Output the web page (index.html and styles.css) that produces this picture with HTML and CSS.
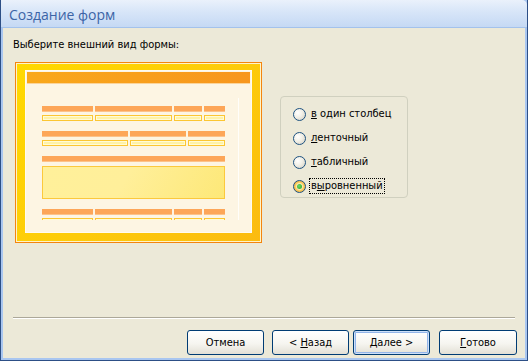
FILE: index.html
```html
<!DOCTYPE html>
<html lang="ru">
<head>
    <meta charset="UTF-8">
    <title>Создание форм</title>
    <link rel="stylesheet" href="styles.css">
</head>
<body>
    <div class="window">
        <div class="titlebar">Создание форм</div>
        <div class="content">
            <p class="prompt">Выберите внешний вид формы:</p>
            <div class="main">
                <div class="preview">
                    <div class="preview-frame">
                        <div class="sheet">
                            <div class="sheet-header"></div>
                            <div class="canvas">
                                <div class="bars cols-a">
                                    <span></span><span></span><span></span><span></span>
                                </div>
                                <div class="fields cols-a">
                                    <span></span><span></span><span></span><span></span>
                                </div>
                                <div class="bars cols-b gap-row">
                                    <span></span><span></span><span></span>
                                </div>
                                <div class="fields cols-b">
                                    <span></span><span></span><span></span>
                                </div>
                                <div class="bars gap-row wide">
                                    <span></span>
                                </div>
                                <div class="memo"></div>
                                <div class="bars cols-a gap-row">
                                    <span></span><span></span><span></span><span></span>
                                </div>
                                <div class="fields cols-a">
                                    <span></span><span></span><span></span><span></span>
                                </div>
                            </div>
                        </div>
                    </div>
                </div>

                <div class="layouts">
                    <div class="option">
                        <span class="radio"></span>
                        <span class="option-label"><u>в</u> один столбец</span>
                    </div>
                    <div class="option">
                        <span class="radio"></span>
                        <span class="option-label"><u>л</u>енточный</span>
                    </div>
                    <div class="option">
                        <span class="radio"></span>
                        <span class="option-label"><u>т</u>абличный</span>
                    </div>
                    <div class="option">
                        <span class="radio checked"></span>
                        <span class="option-label focused">в<u>ы</u>ровненный</span>
                    </div>
                </div>
            </div>

            <div class="separator"></div>

            <div class="buttons">
                <button class="btn cancel">Отмена</button>
                <button class="btn back">&lt; <u>Н</u>азад</button>
                <button class="btn next default"><u>Д</u>алее &gt;</button>
                <button class="btn finish"><u>Г</u>отово</button>
            </div>
        </div>
    </div>
</body>
</html>
```

FILE: styles.css
```css
body, html {
    margin: 0;
    height: 100%;
    background-color: #ece9d8;
}
.window {
    width: 528px;
    height: 361px;
    box-sizing: border-box;
    display: flex;
    flex-direction: column;
    background-color: #a9c6f0;
    border-left: 1px solid #2d4f86;
    border-right: 1px solid #2d4f86;
    border-bottom: 1px solid #2d4f86;
    padding: 0 2px 2px 2px;
    font-family: 'DejaVu Sans Condensed', 'DejaVu Sans', sans-serif;
    font-size: 11px;
    color: #000;
}
.titlebar {
    height: 27px;
    margin: 0 -2px;
    padding-left: 8px;
    border-bottom: 1px solid #a3c2ec;
    border-top-right-radius: 5px;
    background: linear-gradient(#eaf1fb, #d7e5f8 45%, #c5d9f4);
    font-family: 'Open Sans', 'DejaVu Sans', sans-serif;
    font-size: 14px;
    line-height: 30px;
    color: #3c64a6;
}
.content {
    flex: 1;
    background-color: #ece9d8;
    display: flex;
    flex-direction: column;
}
.prompt {
    margin: 0;
    padding: 10px 0 0 10px;
    line-height: 14px;
}
.main {
    display: flex;
    align-items: flex-start;
    margin-top: 10px;
    padding-left: 12px;
}

/* form preview picture */
.preview {
    width: 247px;
    height: 181px;
    box-sizing: border-box;
    border: 1px solid #f4850e;
    background-color: #fff4c8;
    padding: 1px;
}
.preview-frame {
    height: 100%;
    box-sizing: border-box;
    padding: 6px 8px 8px 8px;
    background: linear-gradient(135deg, #ffd900, #fdcb0a 55%, #fbbb10);
}
.sheet {
    height: 100%;
    box-sizing: border-box;
    border: 1px solid #fffbf0;
    padding: 1px;
    background-color: #fdf5e3;
}
.sheet-header {
    height: 12px;
    background: linear-gradient(100deg, #f9a81b, #f7961d);
    border-bottom: 1px solid #fbd49a;
    box-sizing: border-box;
}
.canvas {
    margin-top: 14px;
    width: 212px;
    height: 122px;
    box-sizing: border-box;
    border-right: 1px solid #fffefa;
    padding: 8px 0 0 15px;
    overflow: hidden;
}
.bars, .fields {
    display: flex;
    gap: 2px;
    width: 183px;
}
.bars span {
    height: 5px;
    background-color: #fda658;
    border-bottom: 1px solid #fcc28a;
}
.fields {
    margin-top: 3px;
}
.fields span {
    height: 6px;
    box-sizing: border-box;
    border: 1px solid #fcc632;
    background-color: #fff2a6;
    box-shadow: inset 0 0 0 1px #fffbd6;
}
.cols-a span:nth-child(1) { width: 51px; }
.cols-a span:nth-child(2) { width: 77px; }
.cols-a span:nth-child(3) { width: 28px; }
.cols-a span:nth-child(4) { width: 21px; }
.cols-b span:nth-child(1) { width: 86px; }
.cols-b span:nth-child(2) { width: 56px; }
.cols-b span:nth-child(3) { width: 37px; }
.wide span { width: 183px; }
.gap-row {
    margin-top: 10px;
}
.memo {
    margin-top: 4px;
    width: 183px;
    height: 33px;
    box-sizing: border-box;
    border: 1px solid #fcc93c;
    background: linear-gradient(120deg, #fff09a, #ffef9a 45%, #fde878);
}

/* layout options */
.layouts {
    margin: 34px 0 0 18px;
    width: 128px;
    height: 102px;
    box-sizing: border-box;
    border: 1px solid #d0d0bf;
    border-radius: 4px;
    padding: 5px 0 0 12px;
}
.option {
    height: 24px;
    display: flex;
    align-items: center;
}
.radio {
    width: 13px;
    height: 13px;
    box-sizing: border-box;
    border: 1px solid #1d5281;
    border-radius: 50%;
    background: radial-gradient(circle at 35% 35%, #ffffff, #f1efe6 45%, #d0ccc0);
    position: relative;
    margin-right: 3px;
    flex-shrink: 0;
}
.radio.checked {
    background: radial-gradient(circle, #fff6d8 30%, #f9c95a 55%, #f3a530);
}
.radio.checked::after {
    content: "";
    position: absolute;
    left: 3px;
    top: 3px;
    width: 5px;
    height: 5px;
    border-radius: 50%;
    background: radial-gradient(circle at 40% 40%, #6ed86a, #21a121);
}
.option-label {
    border: 1px dotted transparent;
    padding: 1px 1px;
    line-height: 12px;
}
.option-label.focused {
    border-color: #000;
}

.separator {
    margin: 74px 10px 0 10px;
    border-top: 1px solid #aca899;
    border-bottom: 1px solid #fff;
}
.buttons {
    display: flex;
    justify-content: flex-end;
    margin-top: 11px;
    padding-right: 8px;
}
.btn {
    width: 77px;
    height: 25px;
    box-sizing: border-box;
    border: 1px solid #003c74;
    border-radius: 3px;
    background: linear-gradient(#ffffff, #f6f5f0 55%, #e3e0d6);
    font-family: inherit;
    font-size: 11px;
    color: #000;
    padding: 0;
}
.btn.cancel { margin-right: 8px; }
.btn.back { margin-right: 4px; }
.btn.next { margin-right: 9px; }
.btn.finish { width: 78px; }
.btn.default {
    box-shadow: inset 0 0 0 1px #cee0f8, inset 0 0 0 2px #93b5e9;
}
```
